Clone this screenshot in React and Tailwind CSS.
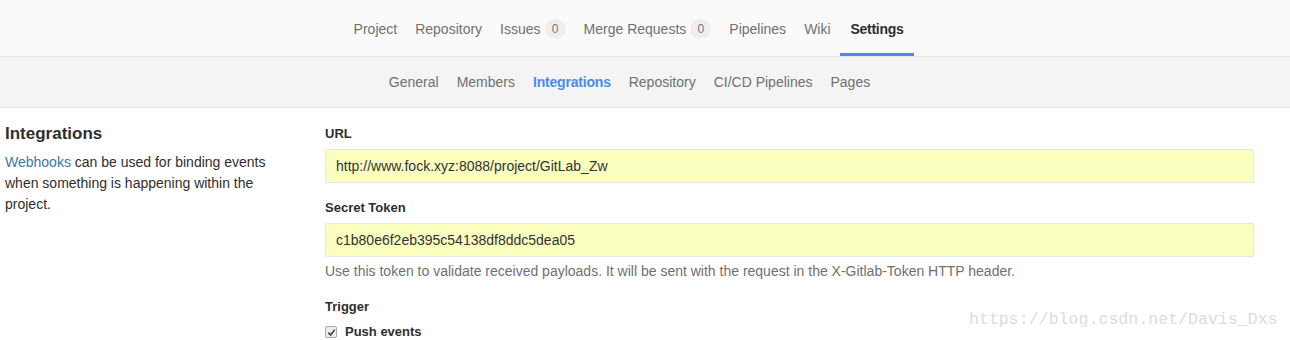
// --- Barre de navigation et formulaire d'intégration ---
const font = { fontFamily: '"Liberation Sans", Arial, sans-serif' };

function Badge({ n }) {
  return (
    <span className="ml-[4px] inline-flex items-center justify-center h-[20px] w-[21px] rounded-full bg-[#eeeeee] text-[12px] text-[#777]">
      {n}
    </span>
  );
}

function TopNav() {
  const items = [
    { label: "Project" },
    { label: "Repository" },
    { label: "Issues", badge: 0 },
    { label: "Merge Requests", badge: 0 },
    { label: "Pipelines" },
    { label: "Wiki" },
    { label: "Settings", active: true },
  ];
  return (
    <div className="h-[57px] bg-[#fafafa] border-b border-[#e5e5e5] flex justify-center">
      <div className="flex items-stretch mr-[31px]">
        {items.map((it) => (
          <div
            key={it.label}
            className={`flex items-center px-[9px] pt-[5px] text-[14px] border-b-[3px] ${
              it.active
                ? "border-[#4a8bee] text-[#2e2e2e] font-bold tracking-[-0.3px] px-[11px]"
                : "border-transparent text-[#707070]"
            }`}
          >
            {it.label}
            {it.badge !== undefined && <Badge n={it.badge} />}
          </div>
        ))}
      </div>
    </div>
  );
}

function SubNav() {
  const items = ["General", "Members", "Integrations", "Repository", "CI/CD Pipelines", "Pages"];
  return (
    <div className="h-[51px] bg-[#f4f4f4] border-b border-[#e5e5e5] flex justify-center items-center">
      <div className="flex items-center gap-[18px] mr-[31px] text-[14px]">
        {items.map((it) => (
          <span
            key={it}
            className={it === "Integrations" ? "text-[#4a8bee] font-bold tracking-[-0.2px]" : "text-[#707070]"}
          >
            {it}
          </span>
        ))}
      </div>
    </div>
  );
}

function Champ({ label, valeur }) {
  return (
    <div>
      <label className="block text-[13px] font-bold text-[#2e2e2e] leading-[19px] mb-[6px]">{label}</label>
      <div className="h-[34px] border border-[#e5e5e5] rounded-[2px] bg-[#faffbd] flex items-center px-[10px] text-[14px] text-[#333]">
        {valeur}
      </div>
    </div>
  );
}

export default function App() {
  return (
    <div className="relative w-[1290px] h-[340px] bg-white overflow-hidden" style={font}>
      <TopNav />
      <SubNav />

      <div className="flex pt-[16px]">
        <div className="w-[325px] pl-[5px]">
          <h4 className="text-[17px] font-bold text-[#2e2e2e] leading-[20px] mb-[8px]">Integrations</h4>
          <p className="w-[270px] text-[14px] leading-[21px] text-[#2e2e2e]">
            <span className="text-[#3777b0]">Webhooks</span> can be used for binding events when
            something is happening within the project.
          </p>
        </div>

        <div className="w-[929px] flex flex-col">
          <Champ label="URL" valeur="http://www.fock.xyz:8088/project/GitLab_Zw" />
          <div className="mt-[15px]">
            <Champ label="Secret Token" valeur="c1b80e6f2eb395c54138df8ddc5dea05" />
          </div>
          <p className="text-[14px] text-[#707070] mt-[5px] leading-[18px]">
            Use this token to validate received payloads. It will be sent with the request in the
            X-Gitlab-Token HTTP header.
          </p>
          <label className="block text-[13px] font-bold text-[#2e2e2e] mt-[18px] leading-[18px]">Trigger</label>
          <div className="flex items-center h-[18px] mt-[7px]">
            <span className="w-[12px] h-[12px] border border-[#aaa] rounded-[2px] bg-[#eee] flex items-center justify-center">
              <svg width="9" height="9" viewBox="0 0 10 10">
                <path d="M1.5 5.2 L4 7.8 L8.6 2" fill="none" stroke="#444" strokeWidth="1.8" />
              </svg>
            </span>
            <span className="ml-[8px] text-[13px] font-bold text-[#2e2e2e] leading-[18px]">Push events</span>
          </div>
        </div>
      </div>

      <div
        className="absolute left-[969px] top-[309px] text-[16.6px] text-[#dcdcdc] leading-[22px]"
        style={{ fontFamily: '"Liberation Mono", "Courier New", monospace' }}
      >
        https://blog.csdn.net/Davis_Dxs
      </div>
    </div>
  );
}
